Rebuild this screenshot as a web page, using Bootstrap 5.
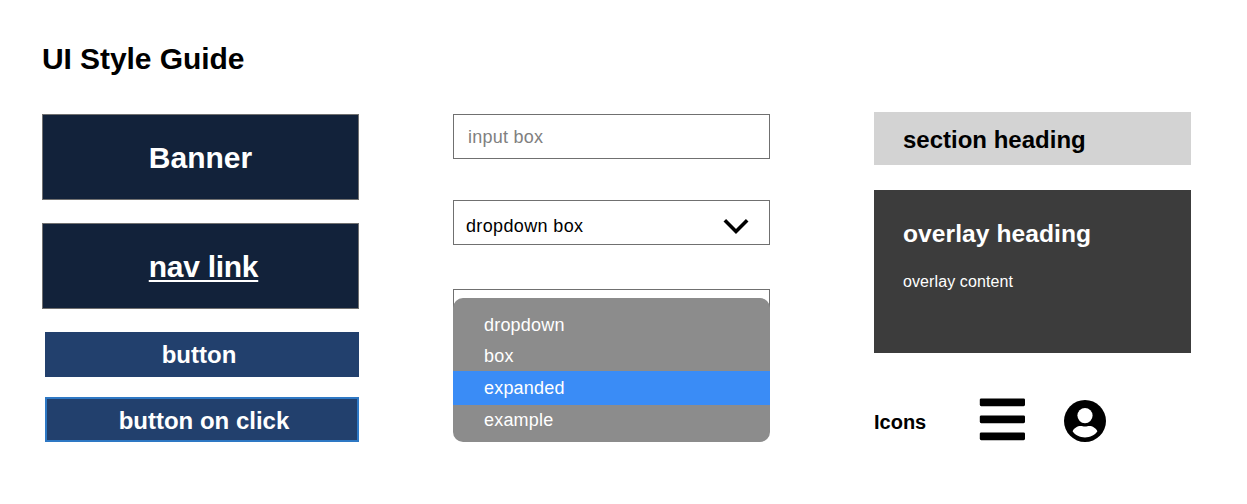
<!DOCTYPE html>
<html lang="en">
<head>
<meta charset="utf-8">
<meta name="viewport" content="width=device-width, initial-scale=1">
<title>UI Style Guide</title>
<link href="https://cdn.jsdelivr.net/npm/bootstrap@5.3.0/dist/css/bootstrap.min.css" rel="stylesheet">
<style>
  body { font-family: "Liberation Sans", Arial, sans-serif; color: #000; background: #fff; line-height: 1; }
  .guide { padding: 42px 56px 0 42px; }
  .guide-title { font-size: 30px; line-height: 34px; letter-spacing: -.08px; margin: 0 0 36px; }
  .guide-col { width: 317px; flex: none; }
  .col-actions { padding-top: 2px; margin-right: 94px; }
  .col-fields { padding-top: 2px; margin-right: 104px; }

  .tile { height: 86px; background: #12223a; border: 1px solid #707070; color: #fff; font-size: 30px; margin-bottom: 23px; padding-top: 1px; }
  .tile a { color: #fff; letter-spacing: -.28px; margin-left: 6px; text-decoration-thickness: 2px; text-underline-offset: 3px; }
  .guide-btn { height: 45px; margin-left: 3px; padding: 0 6px 0 0; border: 0; border-radius: 0; background: #22406d; color: #fff; font-size: 24px; line-height: 45px; }
  .guide-btn:hover { background: #22406d; color: #fff; }
  .guide-btn.clicked { margin-top: 20px; border: 2px solid #2e78c4; line-height: 43px; padding: 0 0 0 4px; }

  .field { height: 45px; border: 1px solid #707070; border-radius: 0; font-size: 18px; background: #fff; }
  .field-input { padding: 2px 14px 0; color: #808080; letter-spacing: .25px; }
  .field-input::placeholder { color: #808080; }
  .field-select { margin-top: 41px; padding: 7px 20px 0 12px; letter-spacing: .36px; }
  .field-open { position: relative; margin-top: 44px; }
  .options { position: absolute; top: 8px; left: -1px; width: 317px; height: 144px; background: #8c8c8c; border-radius: 10px; padding-top: 12px; }
  .options li { height: 31px; line-height: 31px; padding-left: 31px; color: #fff; font-size: 18px; letter-spacing: .2px; }
  .options li.chosen { height: 34px; line-height: 34px; margin-top: -1px; background: #3a8cf6; }

  .section-head { height: 53px; background: #d3d3d3; font-size: 24px; padding: 3px 29px 0; margin: 0 0 25px; }
  .overlay-box { height: 163px; background: #3c3c3c; color: #fff; padding: 30px 29px 0; }
  .overlay-box h3 { font-size: 24.6px; line-height: 28px; letter-spacing: .06px; margin: 0 0 25px; }
  .overlay-box p { font-size: 16px; line-height: 18px; letter-spacing: .1px; }
  .icons-row { margin-top: 45px; height: 46px; }
  .icons-label { width: 105px; font-size: 20px; padding-top: 2px; }
  .icon-menu { margin: 0 38px 4px 0; }
</style>
</head>
<body>
<main class="guide">
  <h1 class="guide-title fw-bold">UI Style Guide</h1>
  <div class="d-flex align-items-start">

    <section class="guide-col col-actions d-flex flex-column">
      <div class="tile d-flex align-items-center justify-content-center fw-bold">Banner</div>
      <div class="tile d-flex align-items-center justify-content-center fw-bold"><a href="#">nav link</a></div>
      <button type="button" class="btn guide-btn fw-bold">button</button>
      <button type="button" class="btn guide-btn clicked fw-bold">button on click</button>
    </section>

    <section class="guide-col col-fields">
      <input type="text" class="form-control field field-input" placeholder="input box" aria-label="input box">
      <div class="field field-select d-flex align-items-center justify-content-between">
        <span>dropdown box</span>
        <svg width="26" height="17" viewBox="0 0 26 17" fill="none" stroke="#000" stroke-width="3.6" aria-hidden="true"><path d="M1.8 2.2 13 13.4 24.2 2.2"/></svg>
      </div>
      <div class="field field-open">
        <ul class="options list-unstyled mb-0">
          <li>dropdown</li>
          <li>box</li>
          <li class="chosen">expanded</li>
          <li>example</li>
        </ul>
      </div>
    </section>

    <section class="guide-col">
      <h2 class="section-head d-flex align-items-center fw-bold">section heading</h2>
      <div class="overlay-box">
        <h3 class="fw-bold">overlay heading</h3>
        <p class="mb-0">overlay content</p>
      </div>
      <div class="icons-row d-flex align-items-center">
        <div class="icons-label fw-bold">Icons</div>
        <svg class="icon-menu" width="47" height="44" viewBox="0 0 47 44" aria-hidden="true"><rect x=".8" y="1.4" width="45.2" height="7.8" rx="1.4"/><rect x=".8" y="18.4" width="45.2" height="7.8" rx="1.4"/><rect x=".8" y="35.4" width="45.2" height="7.8" rx="1.4"/></svg>
        <svg width="42" height="42" viewBox="0 0 42 42" aria-hidden="true"><circle cx="21" cy="21" r="21"/><circle cx="21" cy="15.6" r="7.6" fill="#fff"/><path fill="#fff" d="M8.6 31.2C10 28 13.6 26 16.6 26c1.600 0 2.600.6 4.400.6s2.800-.6 4.400-.6c3 0 6.600 2 8 5.200C30.600 35.200 26.200 37.400 21 37.400S11.400 35.200 8.600 31.200Z"/></svg>
      </div>
    </section>
  </div>
</main>
<script src="https://cdn.jsdelivr.net/npm/bootstrap@5.3.0/dist/js/bootstrap.bundle.min.js"></script>
</body>
</html>
